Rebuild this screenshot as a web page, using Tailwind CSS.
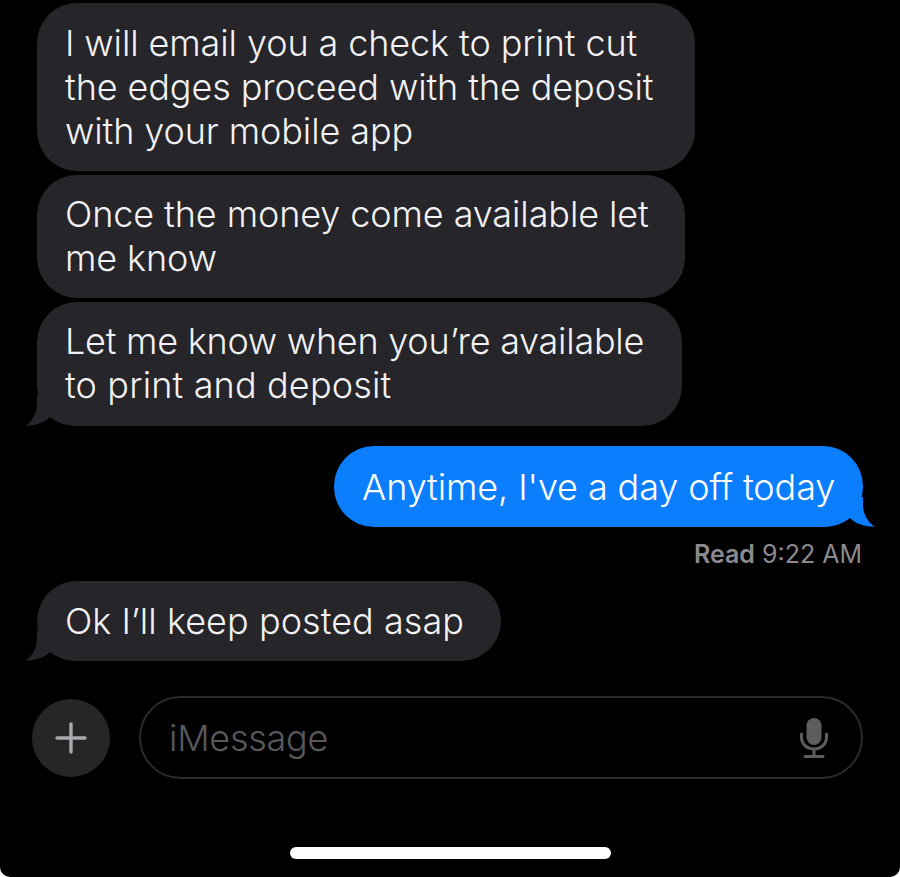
<!DOCTYPE html>
<html lang="en">
<head>
    <meta charset="UTF-8">
    <title>iMessage</title>
    <script src="https://cdn.jsdelivr.net/npm/@tailwindcss/browser@4"></script>
</head>
<body class="bg-white">
    <div class="relative h-[877px] w-[900px] overflow-hidden rounded-b-[10px] bg-black font-['Inter',sans-serif] text-[36px] font-[350] leading-[44px] tracking-[-0.1px] text-[#f2f2f4]">
        <!-- Thread -->
        <div class="flex flex-col pt-[3px]">
            <div class="ml-[37px] h-[168px] w-[658px] rounded-[40px] bg-[#26252a] px-[28px] pt-[18px]">
                <p>I will email you a check to print cut</p>
                <p>the edges proceed with the deposit</p>
                <p>with your mobile app</p>
            </div>
            <div class="ml-[37px] mt-[4px] h-[123px] w-[648px] rounded-[40px] bg-[#26252a] px-[28px] pt-[17px]">
                <p>Once the money come available let</p>
                <p>me know</p>
            </div>
            <div class="relative ml-[37px] mt-[4px] h-[124px] w-[645px] rounded-[40px] bg-[#26252a] px-[28px] pt-[17px]">
                <svg class="absolute bottom-0 left-[-13px]" width="60" height="30" viewBox="0 0 60 30"><path d="M13 0V8C13 17 8 26 1 29.500C11 30 20 27 26 21C32 26 42 30 54 30H60V0Z" fill="#26252a"/></svg>
                <p class="relative tracking-[-0.25px]">Let me know when you’re available</p>
                <p class="relative tracking-[0.15px]">to print and deposit</p>
            </div>
            <div class="relative ml-[334px] mt-[20px] h-[81px] w-[529px] rounded-[40px] bg-[#0b7efe] pl-[28px] pt-[19px] text-white">
                <svg class="absolute bottom-0 right-[-13px]" width="60" height="30" viewBox="0 0 60 30"><path d="M47 0V8C47 17 52 26 59 29.500C49 30 40 27 34 21C28 26 18 30 6 30H0V0Z" fill="#0b7efe"/></svg>
                <p class="relative">Anytime, I've a day off today</p>
            </div>
            <p class="mr-[38px] mt-[13px] text-right text-[25px] font-normal leading-[28px] tracking-[0] text-[#8a8a8e]"><span class="font-semibold">Read</span> 9:22 AM</p>
            <div class="relative ml-[37px] mt-[13px] h-[80px] w-[464px] rounded-[40px] bg-[#26252a] pl-[28px] pt-[18px]">
                <svg class="absolute bottom-0 left-[-13px]" width="60" height="30" viewBox="0 0 60 30"><path d="M13 0V8C13 17 8 26 1 29.500C11 30 20 27 26 21C32 26 42 30 54 30H60V0Z" fill="#26252a"/></svg>
                <p class="relative tracking-[0.05px]">Ok I’ll keep posted asap</p>
            </div>
        </div>

        <!-- Input row -->
        <div class="mt-[35px] flex items-center pl-[32px]">
            <div class="flex h-[78px] w-[78px] items-center justify-center rounded-full bg-[#262628]">
                <svg width="32" height="32" viewBox="0 0 32 32"><path d="M16 2V30M2 16H30" stroke="#a9a9ad" stroke-width="3.4" stroke-linecap="round"/></svg>
            </div>
            <div class="ml-[29px] flex h-[83px] w-[724px] items-center justify-between rounded-full border-2 border-[#2b2b2d] pl-[28px] pr-[33px] text-[#59595c]">
                <span class="tracking-[-0.25px]">iMessage</span>
                <svg width="28" height="40" viewBox="0 0 28 40" fill="none">
                    <rect x="6.500" y="0" width="15" height="27" rx="7.500" fill="#5d5d60"/>
                    <path d="M1.500 16V19C1.500 26 7 31 14 31C21 31 26.500 26 26.500 19V16M14 31V38M5 38.500H23" stroke="#5d5d60" stroke-width="3" stroke-linecap="round"/>
                </svg>
            </div>
        </div>

        <!-- Home indicator -->
        <div class="absolute bottom-[18px] left-[290px] h-[12px] w-[321px] rounded-full bg-white"></div>
    </div>
</body>
</html>
